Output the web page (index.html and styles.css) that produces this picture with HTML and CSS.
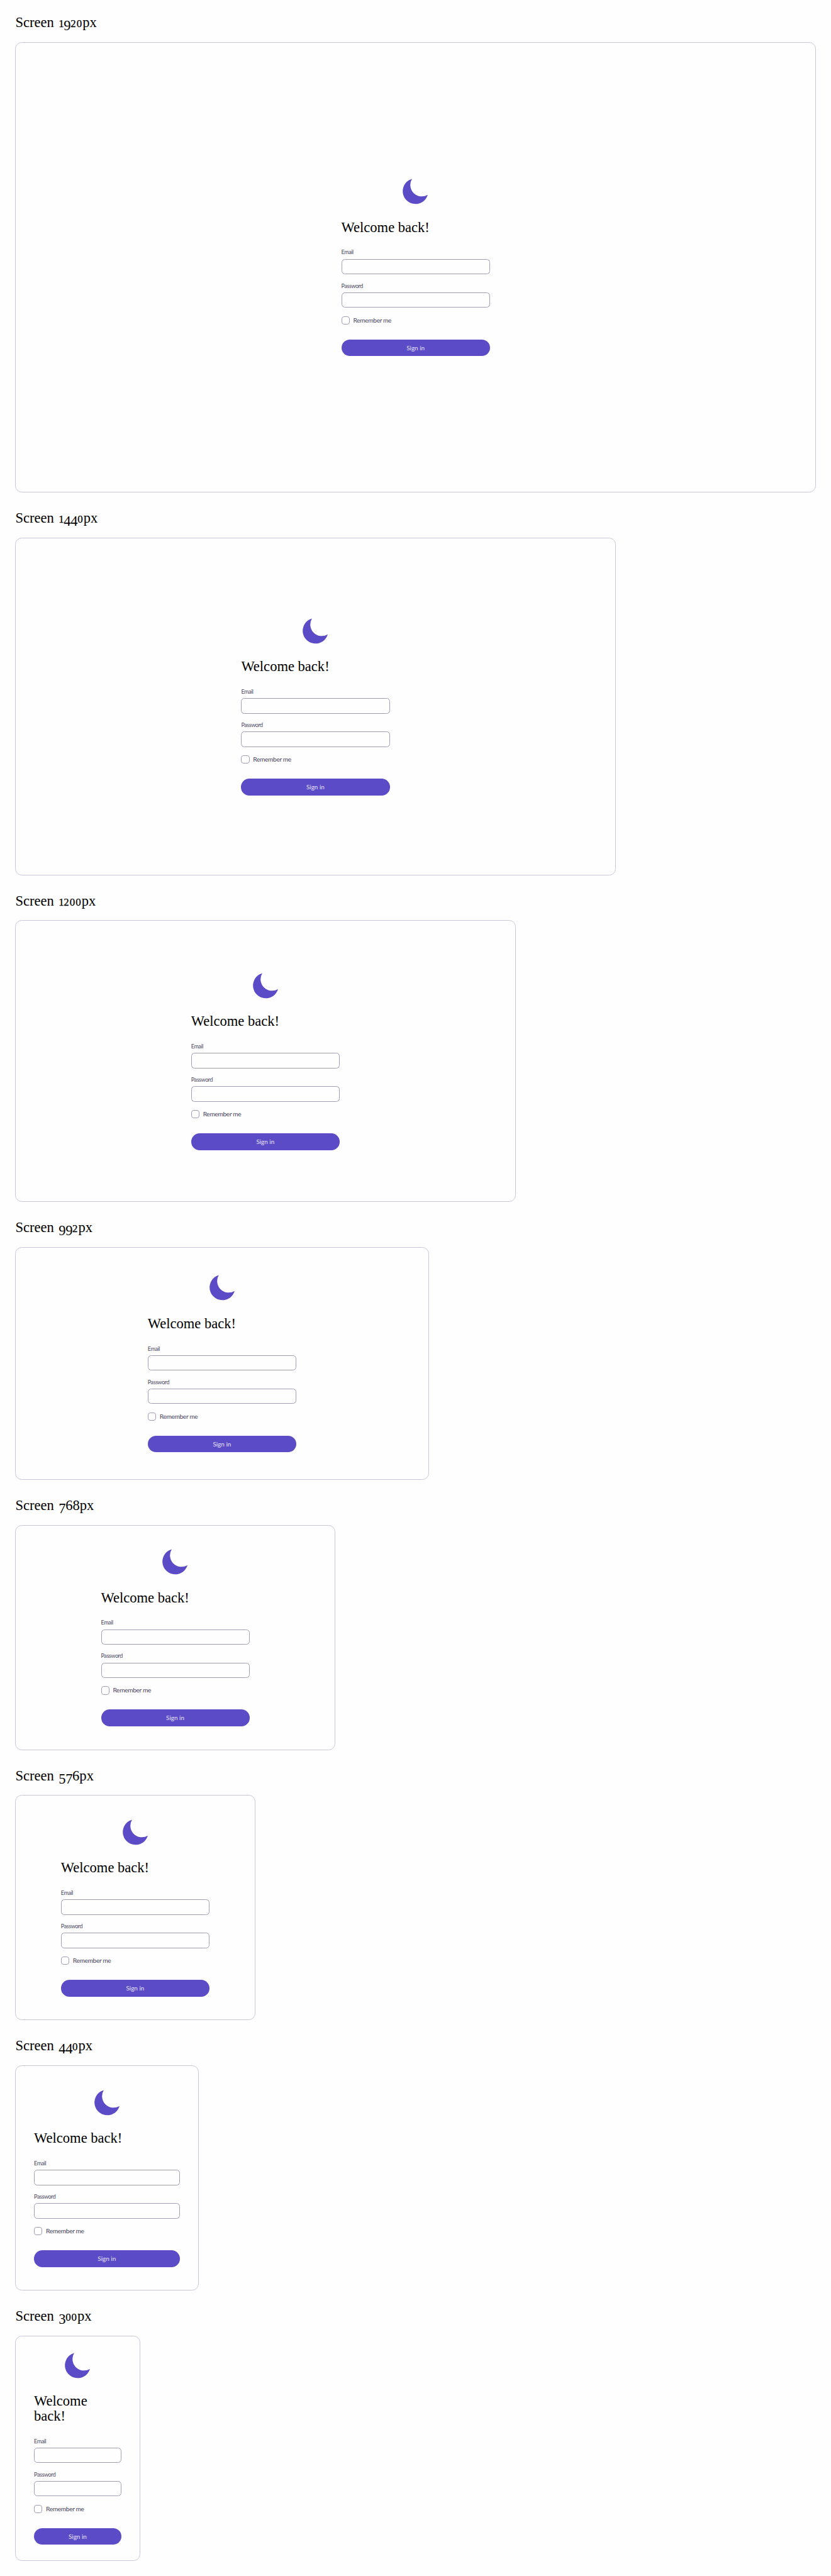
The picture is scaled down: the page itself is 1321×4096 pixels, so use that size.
FILE: index.html
```html
<!DOCTYPE html>
<html lang="en">
<head>
<meta charset="utf-8">
<title>Sign in</title>
<link rel="stylesheet" href="styles.css">
</head>
<body>
<svg class="sprite" aria-hidden="true"><symbol id="moon" viewBox="0 0 64 64"><path d="M24 2.3A27.6 27.6 0 0 0 61.8 40.3A30.6 30.6 0 1 1 24 2.3Z"/></symbol></svg>
<main class="page"></main>
<template id="screen">
<section class="screen">
<h2 class="heading"></h2>
<div class="frame">
<form class="form">
<svg class="logo"><use href="#moon"/></svg>
<h1 class="title">Welcome back!</h1>
<label class="label">Email</label>
<input class="input" type="email">
<label class="label">Password</label>
<input class="input" type="password">
<label class="remember"><span class="box"></span><span>Remember me</span></label>
<button class="button" type="button">Sign in</button>
</form>
</div>
</section>
</template>
<script src="script.js"></script>
</body>
</html>
```
FILE: styles.css
```css
/* 1rem is ten design units */
html { font-size: 6.633px; }
* { box-sizing: border-box; }
body { margin: 0; background: #fefefe; color: #000; font-family: Lato, sans-serif; }
.sprite { display: none; }
.page { display: flex; flex-direction: column; align-items: flex-start; gap: 4.2rem; padding: 3.45rem 3.6rem 3.6rem; }
.heading { margin: 0 0 2.6rem 0.1rem; height: 4rem; font: 400 3.4rem/4rem "Liberation Serif", serif; word-spacing: 0.25rem; white-space: nowrap; }
/* Old-style figures: 0-2 sit at x-height, 3, 4, 5, 7 and 9 descend */
.fig-small { font-size: 0.75em; letter-spacing: 0.15rem; line-height: 0; -webkit-text-stroke: 0.25px #000; }
.fig-one { font-size: 0.75em; letter-spacing: -0.05rem; line-height: 0; -webkit-text-stroke: 0.25px #000; }
.fig-low { vertical-align: -0.22em; line-height: 0; letter-spacing: -0.05rem; }
.frame { display: flex; align-items: center; justify-content: center; border: 1px solid #c9c7d8; border-radius: 1.6rem; }
.w1920 { width: 192rem; height: 108rem; }
.w1440 { width: 144rem; height: 81rem; }
.w1200 { width: 120rem; height: 67.5rem; }
.w992 { width: 99.2rem; height: 55.8rem; }
.w768 { width: 76.8rem; height: 54rem; }
.w576 { width: 57.6rem; height: 54rem; }
.w440 { width: 44rem; height: 54rem; }
.w300 { width: 30rem; height: 54rem; }
.form { display: flex; flex-direction: column; width: calc(100% - 8.8rem); max-width: 35.6rem; }
.logo { width: 6.4rem; height: 6.4rem; align-self: center; fill: #5c4bc7; }
.title { margin: 3.6rem 0 3.3rem; font: 400 3.4rem/3.6rem "Liberation Serif", serif; }
.label { margin-bottom: 0.75rem; font-size: 1.35rem; line-height: 1.7rem; letter-spacing: -0.06rem; color: #4a4760; }
.input { width: 100%; height: 3.7rem; margin: 0 0 1.85rem; padding: 0 1rem; border: 1px solid #a09eb4; border-radius: 0.8rem; background: #fefefe; outline: 0; }
.remember { display: flex; align-items: center; gap: 0.85rem; height: 2rem; margin: 0.15rem 0 3.6rem; font-size: 1.55rem; line-height: 2rem; letter-spacing: -0.06rem; color: #4a4760; }
.box { width: 2rem; height: 2rem; border: 1px solid #a09eb4; border-radius: 0.6rem; }
.button { height: 4rem; padding: 0; border: 0; border-radius: 2rem; background: #5c4bc7; color: #e6e2fb; font: 400 1.5rem/4rem Lato, sans-serif; }
```
FILE: script.js
```js
const figure = { 0: 'fig-small', 1: 'fig-one', 2: 'fig-small', 3: 'fig-low', 4: 'fig-low', 5: 'fig-low', 7: 'fig-low', 9: 'fig-low' };
const template = document.getElementById('screen');
const page = document.querySelector('.page');

for (const width of [1920, 1440, 1200, 992, 768, 576, 440, 300]) {
  const screen = template.content.cloneNode(true);
  const digits = [...String(width)].map(d => figure[d] ? `<span class="${figure[d]}">${d}</span>` : d).join('');
  screen.querySelector('.heading').innerHTML = `Screen ${digits}px`;
  screen.querySelector('.frame').classList.add(`w${width}`);
  page.append(screen);
}
```
